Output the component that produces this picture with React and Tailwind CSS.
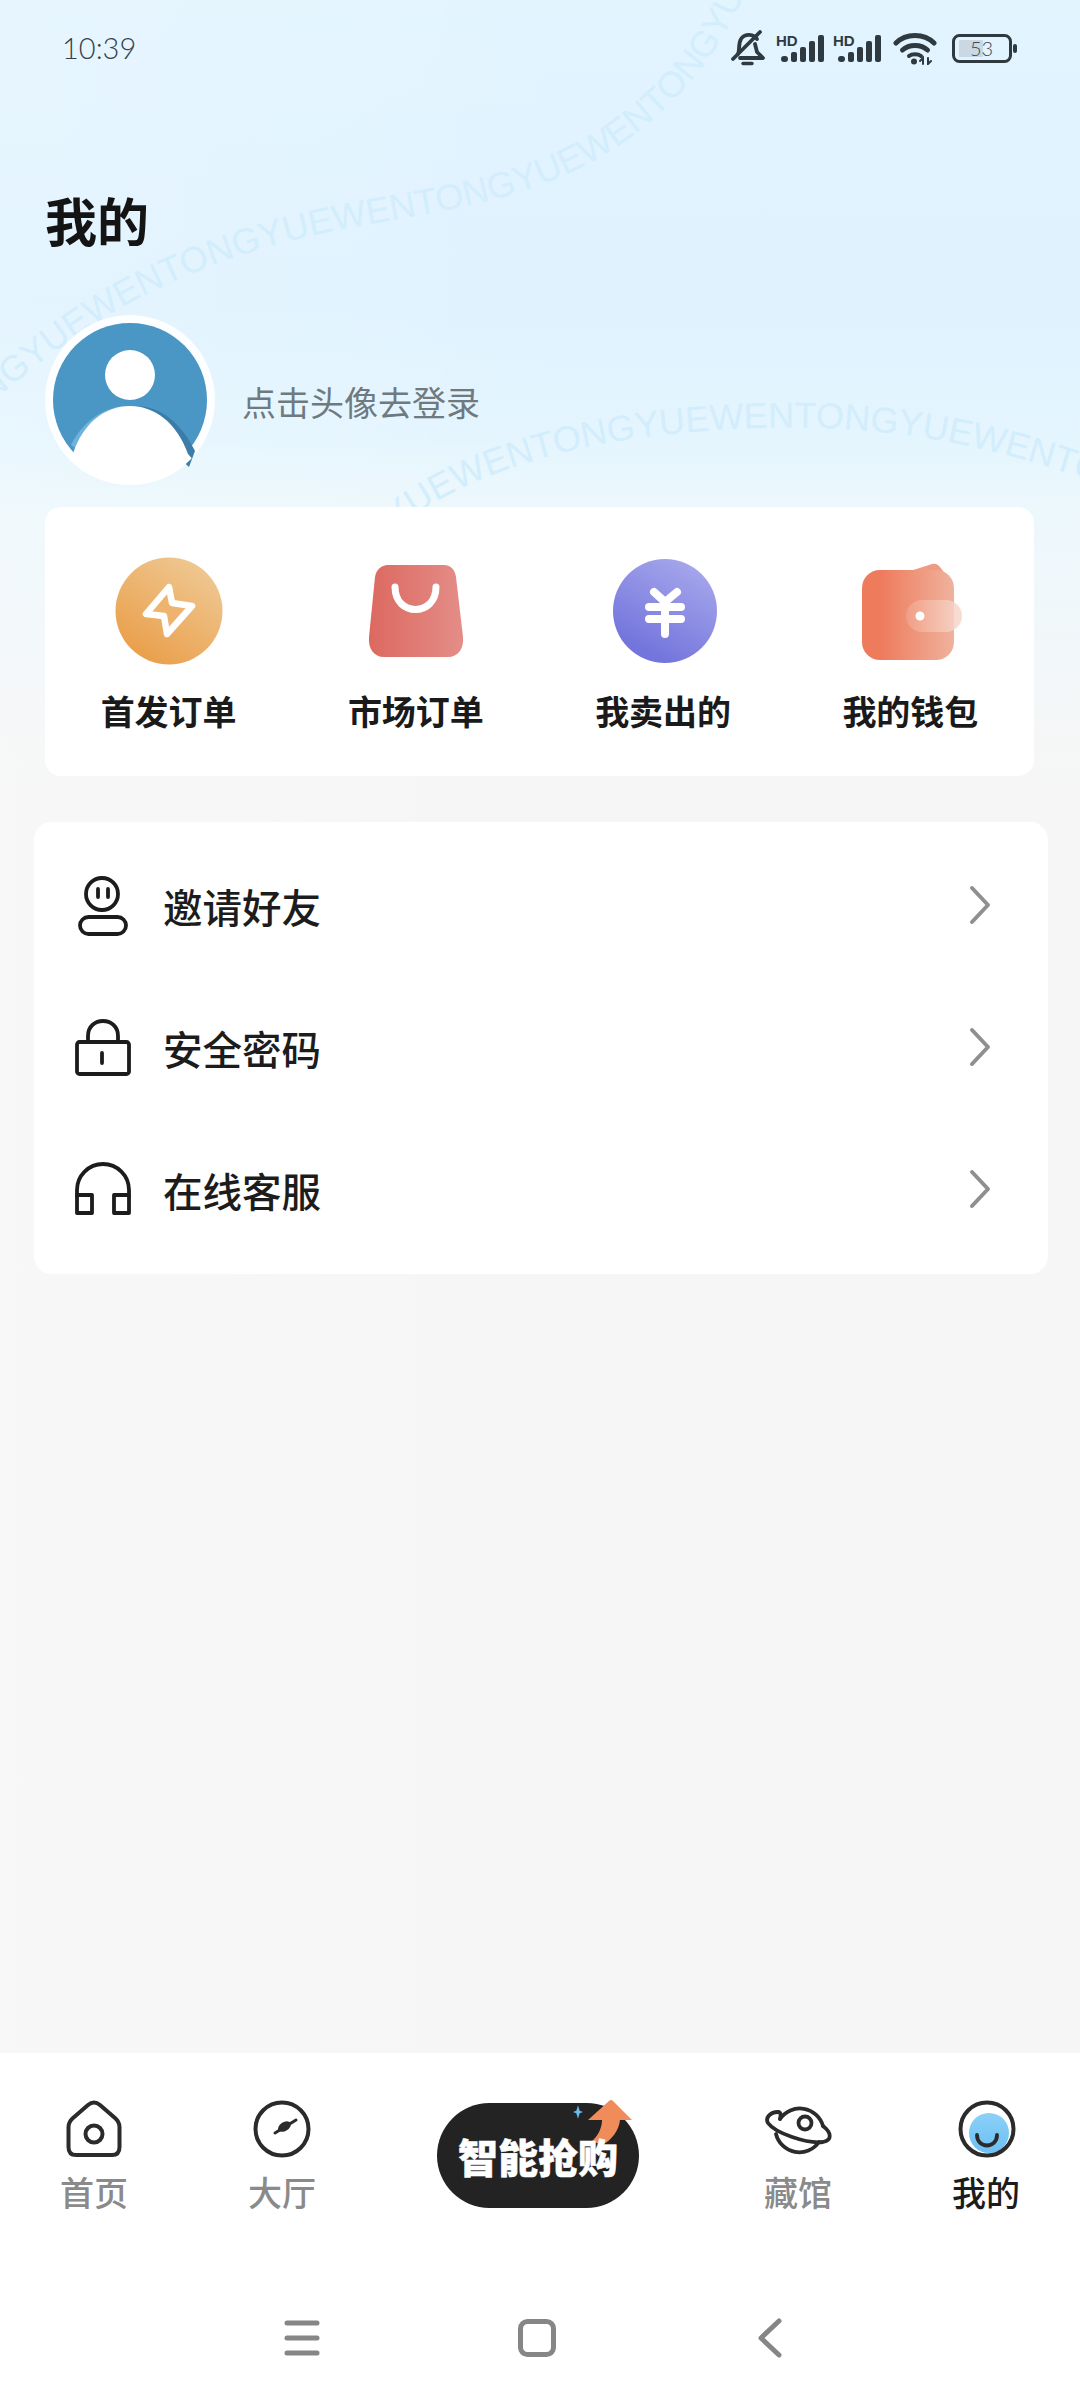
import React from "react";

function BellOff() {
  return (
    <svg width="34" height="36" viewBox="0 0 34 36" fill="none" stroke="#2f3a40" strokeWidth="3.8" strokeLinecap="round" strokeLinejoin="round">
      <path d="M26 9 C23 4 14 3 10 9 C7 14 9 20 7 24" />
      <path d="M24 14 L26 22 L32 28 H9" />
      <path d="M2 29 L29 2" />
      <path d="M12 33.5 H21" strokeWidth="3.4" />
    </svg>
  );
}

function Signal() {
  return (
    <svg width="49" height="30" viewBox="0 0 49 30" className="shrink-0">
      <text x="0" y="13" fontSize="15" fontWeight="700" fill="#2f3a40" fontFamily="Liberation Sans">HD</text>
      <rect x="5" y="23" width="7" height="6" rx="3" fill="#2f3a40" />
      <rect x="15" y="19" width="6" height="10" rx="2" fill="#2f3a40" />
      <rect x="24" y="14" width="6" height="15" rx="2" fill="#2f3a40" />
      <rect x="33" y="8" width="6" height="21" rx="2" fill="#2f3a40" />
      <rect x="42" y="2" width="6" height="27" rx="2" fill="#2f3a40" />
    </svg>
  );
}

function Wifi() {
  return (
    <svg width="44" height="33" viewBox="0 0 44 33" fill="none" stroke="#2f3a40" strokeWidth="5" strokeLinecap="round">
      <path d="M3 11 C13 1 31 1 41 11" />
      <path d="M9.5 18 C16 12 28 12 34.5 18" />
      <path d="M16 24 C19 21.5 25 21.5 28 24" strokeWidth="4" />
      <circle cx="21" cy="29.5" r="3" fill="#2f3a40" stroke="none" />
      <path d="M30 32 V26 L27 29 M35 26 V32 L38 29" strokeWidth="2" />
    </svg>
  );
}

function Battery() {
  return (
    <svg width="65" height="29" viewBox="0 0 65 29">
      <rect x="1.5" y="1.5" width="57" height="26" rx="6" fill="none" stroke="#2f3a40" strokeWidth="3" />
      <rect x="7" y="6" width="24" height="17" rx="1" fill="#c9d8e2" />
      <rect x="61" y="10" width="4" height="9" rx="2" fill="#2f3a40" />
      <text x="18" y="22" fontSize="20" fontWeight="300" fill="#3a4a52" fontFamily="Lato">53</text>
    </svg>
  );
}

function Avatar() {
  return (
    <svg width="170" height="170" viewBox="0 0 170 170" className="shrink-0">
      <defs>
        <clipPath id="avatarOuter">
          <circle cx="85" cy="85" r="85" />
        </clipPath>
      </defs>
      <circle cx="85" cy="85" r="85" fill="#fdfeff" />
      <circle cx="85" cy="85" r="77" fill="#4a96c4" />
      <circle cx="85" cy="60" r="25" fill="#ffffff" />
      <path d="M90 91 C116 91 136 108 150 136 L144 152 L120 130 Z" fill="#3b7da8" />
      <path d="M26 130 C38 106 60 91 83 91 C62 94 44 112 33 135 Z" fill="#6fb2dc" />
      <g clipPath="url(#avatarOuter)">
        <path d="M28 139 C38 108 60 91 85 91 C110 91 132 108 143 139 L170 170 L0 170 Z" fill="#ffffff" />
      </g>
    </svg>
  );
}

function BoltIcon() {
  return (
    <svg width="108" height="108" viewBox="0 0 108 108">
      <defs>
        <linearGradient id="orangeGrad" x1="0.8" y1="0.1" x2="0.25" y2="0.9">
          <stop offset="0" stopColor="#efc68f" />
          <stop offset="1" stopColor="#eaa14e" />
        </linearGradient>
      </defs>
      <circle cx="54" cy="54" r="53.5" fill="url(#orangeGrad)" />
      <path d="M54 30 L31 57 L49 59 L52 77 L77 49 L57 46 Z" fill="#eeb36e" stroke="#fff" strokeWidth="6.5" strokeLinejoin="round" />
    </svg>
  );
}

function BagIcon() {
  return (
    <svg width="96" height="92" viewBox="0 0 96 92">
      <defs>
        <linearGradient id="bagGrad" x1="0" y1="0" x2="1" y2="0">
          <stop offset="0" stopColor="#dc6960" />
          <stop offset="1" stopColor="#e48d88" />
        </linearGradient>
      </defs>
      <path d="M20 0 H76 C83 0 87 5 88 12 L95 72 C96 84 90 92 80 92 H16 C6 92 0 84 1 72 L7 12 C8 5 13 0 20 0 Z" fill="url(#bagGrad)" />
      <path d="M27 22 C27 52 68 52 68 22" fill="none" stroke="#fff" strokeWidth="7" strokeLinecap="round" />
    </svg>
  );
}

function YenIcon() {
  return (
    <svg width="104" height="104" viewBox="0 0 104 104" className="ml-[3px]">
      <defs>
        <linearGradient id="purpleGrad" x1="0.8" y1="0" x2="0.3" y2="0.9">
          <stop offset="0" stopColor="#a8a9ec" />
          <stop offset="1" stopColor="#7374dc" />
        </linearGradient>
      </defs>
      <circle cx="52" cy="52" r="52" fill="url(#purpleGrad)" />
      <path d="M41 33 L52 43 L64 33 M36 48 H68 M36 60 H68 M52 44 V75" fill="none" stroke="#fff" strokeWidth="8" strokeLinecap="round" strokeLinejoin="round" />
    </svg>
  );
}

function WalletIcon() {
  return (
    <svg width="100" height="97" viewBox="0 0 100 97" className="ml-[3px]">
      <defs>
        <linearGradient id="walletGrad" x1="0" y1="0" x2="1" y2="0">
          <stop offset="0.2" stopColor="#ee7b5c" />
          <stop offset="1" stopColor="#efb29d" />
        </linearGradient>
        <linearGradient id="claspGrad" x1="0" y1="0" x2="1" y2="0">
          <stop offset="0" stopColor="#f5b9a6" stopOpacity="0.35" />
          <stop offset="1" stopColor="#f7d8cc" stopOpacity="0.9" />
        </linearGradient>
      </defs>
      <path d="M45 9 L70 1 C74 0 76 2 78 4 L84 12 Z" fill="#f09a80" />
      <rect x="0" y="7" width="92" height="90" rx="18" fill="url(#walletGrad)" />
      <rect x="44" y="37" width="56" height="32" rx="16" fill="url(#claspGrad)" />
      <circle cx="58" cy="53" r="4.5" fill="#fff" />
    </svg>
  );
}

function InviteIcon() {
  return (
    <svg width="60" height="64" viewBox="0 0 60 64" fill="none" stroke="#1c1c1c" strokeWidth="3.8" strokeLinecap="round">
      <circle cx="30" cy="20" r="16" />
      <path d="M26 15 V23 M36 15 V23" />
      <rect x="8" y="43" width="46" height="17" rx="8.5" />
    </svg>
  );
}

function LockIcon() {
  return (
    <svg width="60" height="64" viewBox="0 0 60 64" fill="none" stroke="#1c1c1c" strokeWidth="3.8" strokeLinecap="round" strokeLinejoin="round">
      <rect x="5" y="26" width="52" height="32" rx="2.5" />
      <path d="M16 25 V20 C16 0 46 0 46 20 V25" />
      <path d="M30 37 V47" />
    </svg>
  );
}

function HeadsetIcon() {
  return (
    <svg width="60" height="64" viewBox="0 0 60 64" fill="none" stroke="#1c1c1c" strokeWidth="3.8" strokeLinecap="round" strokeLinejoin="round">
      <path d="M5 38 V32 A26 26 0 0 1 57 32 V38" />
      <rect x="5" y="37" width="15" height="18" />
      <rect x="42" y="37" width="15" height="18" />
    </svg>
  );
}

function Chevron() {
  return (
    <svg width="24" height="40" viewBox="0 0 24 40" fill="none" stroke="#8f8f8f" strokeWidth="4" strokeLinecap="round" strokeLinejoin="round" className="-mt-[3px]">
      <path d="M4 3 L20 20 L4 37" />
    </svg>
  );
}

function HomeIcon() {
  return (
    <svg width="56" height="58" viewBox="0 0 56 58" fill="none" stroke="#2b2b2b" strokeWidth="4" strokeLinejoin="round">
      <path d="M22 5 L7 18 Q2.5 22 2.5 27 V47 Q2.5 55 10 55 H46 Q53.5 55 53.5 47 V27 Q53.5 22 49 18 L34 5 Q28 0 22 5 Z" />
      <circle cx="28" cy="34" r="8.5" />
    </svg>
  );
}

function CompassIcon() {
  return (
    <svg width="58" height="58" viewBox="0 0 58 58" fill="none" stroke="#2b2b2b">
      <circle cx="29" cy="29" r="26.5" strokeWidth="4" />
      <path d="M22 33 L43 20" strokeWidth="3" strokeLinecap="round" />
      <ellipse cx="31.5" cy="26.5" rx="7" ry="4.5" transform="rotate(-32 31.5 26.5)" fill="#2b2b2b" stroke="none" />
    </svg>
  );
}

function PlanetIcon() {
  return (
    <svg width="68" height="53" viewBox="0 0 68 53" fill="none" stroke="#2b2b2b" strokeWidth="3.8" strokeLinecap="round" className="ml-[2px]">
      <path d="M15 16 A24 24 0 0 1 58 23" />
      <path d="M11 31 A24 24 0 0 0 54 39" />
      <circle cx="40" cy="20" r="6.5" />
      <path d="M13 9 C5 9 0 15 3 20 C10 30 42 41 58 39 C67 37 67 30 58 23" />
      <path d="M13 9 C16 9 16 12 15 16" />
    </svg>
  );
}

function MineIcon() {
  return (
    <svg width="58" height="58" viewBox="0 0 58 58" fill="none" className="ml-[2px]">
      <defs>
        <linearGradient id="mineGrad" x1="0" y1="0" x2="0" y2="1">
          <stop offset="0" stopColor="#8bd0f8" />
          <stop offset="1" stopColor="#6cc0f4" />
        </linearGradient>
      </defs>
      <circle cx="31" cy="33" r="20" fill="url(#mineGrad)" />
      <circle cx="29" cy="29" r="26.5" stroke="#2b2b2b" strokeWidth="4" />
      <path d="M19 35 C19 49 39 49 39 35" stroke="#2b2b2b" strokeWidth="3.8" strokeLinecap="round" />
    </svg>
  );
}

function ShopArrow() {
  return (
    <svg width="50" height="50" viewBox="0 0 50 50" className="absolute left-[148px] top-[-5px]">
      <path d="M24 3 Q26 1 28 3 L47 22 H35 C34 32 27 42 17 47 L7 43 C13 38 17 30 17 22 H3 Z" fill="#f08c5a" />
    </svg>
  );
}

function Sparkle() {
  return (
    <svg width="10" height="14" viewBox="0 0 12 16" className="absolute left-[136px] top-[2px]">
      <path d="M6 0 L8 6.5 L12 8 L8 9.5 L6 16 L4 9.5 L0 8 L4 6.5 Z" fill="#68bdf0" />
    </svg>
  );
}

function Watermark() {
  return (
    <svg width="1080" height="520" viewBox="0 0 1080 520" className="absolute left-0 top-0">
      <defs>
        <path id="wave1" d="M-30 422 C60 342 130 287 275 245 C400 210 510 217 620 145 C670 110 720 60 750 -20" />
        <path id="wave2" d="M395 530 C480 460 620 432 760 428 C880 425 980 440 1110 488" />
      </defs>
      <text fontSize="36" fill="#d2edfc" fontFamily="Liberation Sans">
        <textPath href="#wave1">ONGYUEWENTONGYUEWENTONGYUEWENTONGYU</textPath>
      </text>
      <text fontSize="36" fill="#d2edfc" fontFamily="Liberation Sans">
        <textPath href="#wave2">YUEWENTONGYUEWENTONGYUEWENTO</textPath>
      </text>
    </svg>
  );
}

const shortcuts = [
  { label: "首发订单", icon: <BoltIcon /> },
  { label: "市场订单", icon: <BagIcon /> },
  { label: "我卖出的", icon: <YenIcon /> },
  { label: "我的钱包", icon: <WalletIcon /> },
];

const rows = [
  { label: "邀请好友", icon: <InviteIcon /> },
  { label: "安全密码", icon: <LockIcon /> },
  { label: "在线客服", icon: <HeadsetIcon /> },
];

function Tab({ icon, label, active }) {
  return (
    <div className="flex flex-col items-center">
      <div className="flex h-[58px] items-center justify-center">{icon}</div>
      <span className={`mt-[14px] text-[34px] leading-[40px] font-medium ${active ? "text-[#1c1c1c]" : "text-[#8a8a8a]"}`}>{label}</span>
    </div>
  );
}

export default function App() {
  return (
    <div className="relative h-[2400px] w-[1080px] overflow-hidden bg-[linear-gradient(90deg,rgba(255,255,255,0.18),rgba(255,255,255,0)_55%),linear-gradient(180deg,#e2f4fe_0px,#dff2fe_300px,#e4f5fe_440px,#edf8fc_510px,#f6f6f6_780px)] font-['Noto_Sans_CJK_SC',sans-serif]">
      <Watermark />

      <div className="relative flex h-full flex-col">
        {/* status bar */}
        <div className="flex h-[96px] items-center pl-[62px] pr-[63px]">
          <span className="font-['Lato',sans-serif] text-[29px] font-light text-[#33434b]">10:39</span>
          <div className="ml-auto flex items-center">
            <BellOff />
            <div className="ml-[11px]"><Signal /></div>
            <div className="ml-[8px]"><Signal /></div>
            <div className="ml-[11px]"><Wifi /></div>
            <div className="ml-[15px]"><Battery /></div>
          </div>
        </div>

        <h1 className="ml-[45px] mt-[94px] text-[52px] font-bold leading-[60px] text-[#141414]">我的</h1>

        <div className="ml-[45px] mt-[65px] flex items-center gap-[27px]">
          <Avatar />
          <span className="mt-[3px] text-[34px] leading-[44px] text-[#6f7a80]">点击头像去登录</span>
        </div>

        {/* order shortcuts */}
        <div className="ml-[45px] mt-[22px] grid h-[269px] w-[989px] grid-cols-4 rounded-[16px] bg-white pt-[50px]">
          {shortcuts.map((s) => (
            <div key={s.label} className="flex flex-col items-center">
              <div className="flex h-[108px] items-center justify-center">{s.icon}</div>
              <span className="mt-[26px] text-[34px] font-bold leading-[40px] text-[#1a1a1a]">{s.label}</span>
            </div>
          ))}
        </div>

        {/* menu */}
        <div className="ml-[34px] mt-[46px] flex w-[1014px] flex-col rounded-[18px] bg-white py-[13px]">
          {rows.map((r) => (
            <div key={r.label} className="flex h-[142px] items-center pl-[38px] pr-[56px]">
              {r.icon}
              <span className="ml-[31px] text-[39.5px] font-medium leading-[48px] text-[#1c1c1c]">{r.label}</span>
              <div className="ml-auto"><Chevron /></div>
            </div>
          ))}
        </div>

        {/* bottom tabs */}
        <div className="mt-auto h-[347px] bg-white">
          <div className="grid grid-cols-[188px_188px_1fr_188px_188px] pt-[47px]">
            <Tab icon={<HomeIcon />} label="首页" />
            <Tab icon={<CompassIcon />} label="大厅" />
            <div className="flex justify-center pr-[4px]">
              <div className="relative mt-[3px] flex h-[105px] w-[202px] items-center justify-center rounded-full bg-[#232323]">
                <ShopArrow />
                <Sparkle />
                <span className="relative text-[40px] font-black leading-[46px] text-white [-webkit-text-stroke:0.5px_white]">智能抢购</span>
              </div>
            </div>
            <Tab icon={<PlanetIcon />} label="藏馆" />
            <Tab icon={<MineIcon />} label="我的" active />
          </div>

          <div className="mt-[106px] flex items-center pl-[284px]">
            <svg width="36" height="36" viewBox="0 0 36 36" stroke="#868686" strokeWidth="5" strokeLinecap="round">
              <path d="M3 3 H33 M3 18 H33 M3 33 H33" />
            </svg>
            <svg width="38" height="38" viewBox="0 0 38 38" fill="none" stroke="#868686" strokeWidth="5" className="ml-[198px]">
              <rect x="2.5" y="2.5" width="33" height="33" rx="7" />
            </svg>
            <svg width="26" height="40" viewBox="0 0 26 40" fill="none" stroke="#868686" strokeWidth="5" strokeLinecap="round" strokeLinejoin="round" className="ml-[201px]">
              <path d="M22 3 L4 20 L22 37" />
            </svg>
          </div>
        </div>
      </div>
    </div>
  );
}
